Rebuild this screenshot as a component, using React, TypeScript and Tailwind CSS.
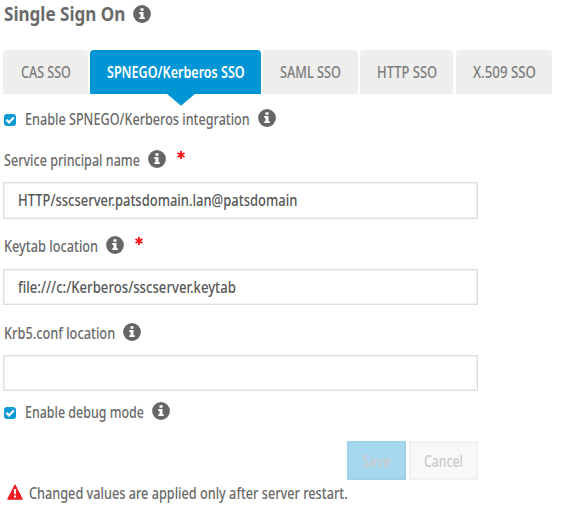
import { useLayoutEffect, useRef, useState } from 'react';

/** A single line of condensed lettering that fills a given width. */
function Label({ text, width, className = '' }: { text: string; width: number; className?: string }) {
  const ref = useRef<HTMLSpanElement>(null);
  const [scale, setScale] = useState(1);
  useLayoutEffect(() => {
    if (ref.current) setScale(width / ref.current.offsetWidth);
  }, [width, text]);
  return (
    <span className="block shrink-0 whitespace-nowrap" style={{ width }}>
      <span ref={ref} className={`inline-block origin-left align-top ${className}`} style={{ transform: `scaleX(${scale})` }}>
        {text}
      </span>
    </span>
  );
}

function Info() {
  return (
    <svg viewBox="0 0 18 18" className="ml-2 size-[18px] shrink-0">
      <circle cx="9" cy="9" r="8.9" fill="#666" />
      <path d="M7.5 3.3h3v2.4h-3zM6.3 7h4.2v5.2h1.3v1.9H6.3v-1.9h1.2V8.9H6.3z" fill="#fff" />
    </svg>
  );
}

function Required() {
  return (
    <svg viewBox="0 0 8 8" className="mb-2 ml-[11px] size-2 shrink-0" stroke="#f5161d" strokeWidth="1.9">
      <path d="M4 0v8M.5 2l7 4M7.5 2l-7 4" />
    </svg>
  );
}

function Check() {
  return (
    <span className="mt-1 mr-[9px] flex size-3 shrink-0 items-center justify-center rounded-[3px] bg-[#0d98d8]">
      <svg viewBox="0 0 12 12" className="size-3" fill="none" stroke="#fff" strokeWidth="2.2">
        <path d="M2.4 5.8l2.6 2.6 4.8-4.9" />
      </svg>
    </span>
  );
}

const field =
  'flex w-[475px] items-center border border-[#dedede] bg-white pb-px pl-[14px] text-[#575757] shadow-[inset_0_0_0_1px_#f1f1f1]';

export default function App() {
  return (
    <main className="flex h-[521px] w-[563px] flex-col overflow-hidden bg-white pl-[3px] font-['Noto_Sans',sans-serif] text-[16px] leading-5 font-medium text-[#6a6a6a]">
      <h1 className="flex h-[28px] items-center pl-px text-[20px] leading-7 font-bold">
        <Label text="Single Sign On" width={121} />
        <Info />
      </h1>

      <nav className="mt-[22px] flex h-[44px] shrink-0 gap-[2px] text-[#7c7c7c]">
        <div className="flex w-[85px] items-center justify-center rounded-t bg-[#eeeeec]">
          <Label text="CAS SSO" width={50} />
        </div>
        <div className="relative flex w-[171px] items-center justify-center rounded-t bg-[#0096d6] font-semibold text-white">
          <Label text="SPNEGO/Kerberos SSO" width={138} />
          <svg viewBox="0 0 30 13" className="absolute top-[43px] left-[76px] h-[13px] w-[30px]">
            <path d="M0 0h30L15 12.7z" fill="#0096d6" />
          </svg>
        </div>
        <div className="flex w-[95px] items-center justify-center rounded-t bg-[#eeeeec]">
          <Label text="SAML SSO" width={61} />
        </div>
        <div className="flex w-[93px] items-center justify-center rounded-t bg-[#eeeeec]">
          <Label text="HTTP SSO" width={60} />
        </div>
        <div className="ml-px flex w-[96px] items-center justify-center rounded-t bg-[#eeeeec]">
          <Label text="X.509 SSO" width={63} />
        </div>
      </nav>

      <div className="mt-[14px] flex h-5 shrink-0 items-center pl-px">
        <Check />
        <Label className="pt-0.5" text="Enable SPNEGO/Kerberos integration" width={225} />
        <Info />
      </div>

      <div className="mt-[21px] flex h-5 shrink-0 items-center pl-px">
        <Label className="pt-0.5" text="Service principal name" width={136} />
        <Info />
        <Required />
      </div>
      <div className={`${field} mt-[13px] h-[37px] shrink-0`}>
        <Label text="HTTP/sscserver.patsdomain.lan@patsdomain" width={279} />
      </div>

      <div className="mt-[16px] flex h-5 shrink-0 items-center pl-px">
        <Label className="pt-0.5" text="Keytab location" width={94} />
        <Info />
        <Required />
      </div>
      <div className={`${field} mt-[14px] h-[36px] shrink-0`}>
        <Label text="file:///c:/Kerberos/sscserver.keytab" width={218} />
      </div>

      <div className="mt-[17px] flex h-5 shrink-0 items-center pl-px">
        <Label className="pt-0.5" text="Krb5.conf location" width={111} />
        <Info />
      </div>
      <div className={`${field} mt-[13px] h-[36px] shrink-0`} />

      <div className="mt-[10px] flex h-5 shrink-0 items-center pl-px">
        <Check />
        <Label className="pt-0.5" text="Enable debug mode" width={119} />
        <Info />
      </div>

      <div className="mt-[20px] flex h-[39px] w-[475px] shrink-0 justify-end gap-[3px] text-[#cacaca]">
        <div className="flex w-[59px] items-center justify-center border-2 border-[#9fd3ec] bg-[#a6d9f0]">
          <Label text="Save" width={29} />
        </div>
        <div className="flex w-[69px] items-center justify-center border-2 border-[#f1f1f1] bg-[#f8f8f8]">
          <Label text="Cancel" width={39} />
        </div>
      </div>

      <div className="mt-[2px] flex h-5 shrink-0 items-center pl-1">
        <svg viewBox="0 0 16 16" className="mr-[6px] size-4 shrink-0">
          <path d="M8 .8L15.4 15.2H.6z" fill="#ef1c24" stroke="#ef1c24" strokeLinejoin="round" />
          <path d="M6.8 5h2.4l-.4 5.3H7.2zM7 11.5h2v2H7z" fill="#fff" />
        </svg>
        <Label className="pt-0.5" text="Changed values are applied only after server restart." width={319} />
      </div>
    </main>
  );
}
